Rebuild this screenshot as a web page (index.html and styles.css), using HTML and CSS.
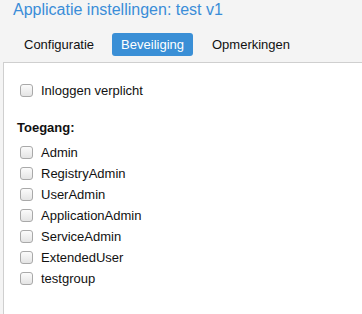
FILE: index.html
```html
<!DOCTYPE html>
<html lang="en">
<head>
  <meta charset="UTF-8" />
  <title>Applicatie instellingen</title>
  <link rel="stylesheet" href="styles.css">
</head>
<body>

  <h1 class="title">Applicatie instellingen: test v1</h1>

  <div class="tabs">
    <span class="tab">Configuratie</span>
    <span class="tab tab-active">Beveiliging</span>
    <span class="tab">Opmerkingen</span>
  </div>

  <div class="panel">
    <label class="check"><input type="checkbox" /> Inloggen verplicht</label>

    <div class="group-title">Toegang:</div>

    <label class="check"><input type="checkbox" /> Admin</label>
    <label class="check"><input type="checkbox" /> RegistryAdmin</label>
    <label class="check"><input type="checkbox" /> UserAdmin</label>
    <label class="check"><input type="checkbox" /> ApplicationAdmin</label>
    <label class="check"><input type="checkbox" /> ServiceAdmin</label>
    <label class="check"><input type="checkbox" /> ExtendedUser</label>
    <label class="check"><input type="checkbox" /> testgroup</label>
  </div>

</body>
</html>
```

FILE: styles.css
```css
html, body {
  margin: 0;
  height: 100%;
}
body {
  font-family: "Liberation Sans", Arial, sans-serif;
  font-size: 13px;
  background-color: #f4f4f4;
  color: #111;
  display: flex;
  flex-direction: column;
}
.title {
  margin: 0;
  padding-left: 13px;
  font-size: 16px;
  font-weight: normal;
  line-height: 20px;
  color: #3a8dd8;
}
.tabs {
  display: flex;
  margin-top: 13px;
  padding-left: 16px;
  gap: 10px;
}
.tab {
  padding: 0 8px;
  height: 23px;
  line-height: 23px;
  border-radius: 3px;
}
.tab-active {
  padding: 0 9px;
  background-color: #3a8fd6;
  color: #fff;
}
.tab-active + .tab {
  margin-left: 1px;
}
.panel {
  flex: 1;
  margin: 6px 0 0 3px;
  padding: 17px 0 0 13px;
  background-color: #fff;
  border-top: 1px solid #cfcfcf;
  border-left: 1px solid #cfcfcf;
}
.check {
  display: flex;
  align-items: center;
  height: 21px;
}
.check input {
  appearance: none;
  width: 13px;
  height: 13px;
  margin: 0 8px 0 3px;
  border: 1px solid #a9a9a9;
  border-radius: 3px;
  background: linear-gradient(#fbfbfb, #e4e4e4);
}
.group-title {
  font-weight: bold;
  line-height: 21px;
  margin: 16px 0 4px;
}
```
